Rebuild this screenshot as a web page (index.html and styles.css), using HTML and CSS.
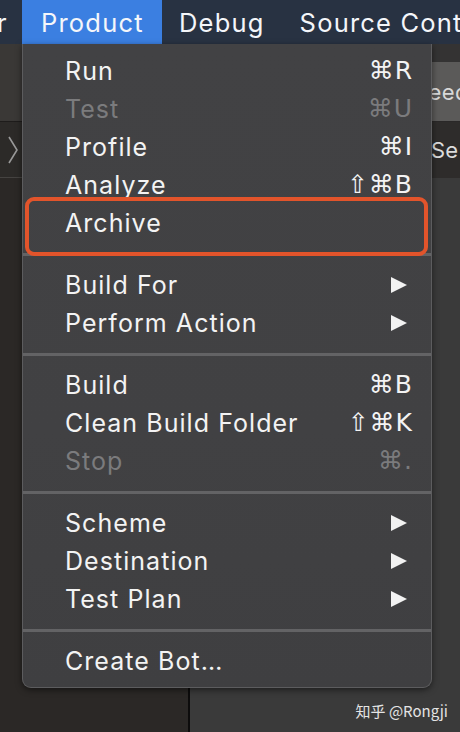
FILE: index.html
```html
<!DOCTYPE html>
<html>
<head>
<meta charset="utf-8">
<link rel="stylesheet" href="styles.css">
</head>
<body>
<div class="screen">
  <div class="menubar">
    <span class="mb-item mb-cut">r</span>
    <span class="mb-item mb-active">Product</span>
    <span class="mb-item">Debug</span>
    <span class="mb-item">Source Control</span>
  </div>
  <div class="window">
    <div class="pane-left">
      <div class="pl-top"></div>
      <div class="pl-row">
        <svg class="chev" width="12" height="30" viewBox="0 0 12 30"><polyline points="2,2 10,15 2,28" fill="none" stroke="#9a9a9a" stroke-width="1.6"/></svg>
      </div>
      <div class="pl-rest"></div>
    </div>
    <div class="pane-right">
      <div class="pr-strip"></div>
      <div class="pr-tool"><span class="pr-tool-text">eed</span></div>
      <div class="pr-row"><span class="pr-row-text">Se</span></div>
      <div class="pr-rest"></div>
    </div>
  </div>

  <div class="menu">
    <div class="row"><span>Run</span><span class="sc">⌘R</span></div>
    <div class="row dis"><span>Test</span><span class="sc">⌘U</span></div>
    <div class="row"><span>Profile</span><span class="sc">⌘I</span></div>
    <div class="row"><span>Analyze</span><span class="sc">⇧⌘B</span></div>
    <div class="row"><span>Archive</span></div>
    <div class="sep"></div>
    <div class="row"><span>Build For</span><svg class="tri" width="18" height="18" viewBox="0 0 18 18"><polygon points="1,1 17,9 1,17" fill="#f2f2f2"/></svg></div>
    <div class="row"><span>Perform Action</span><svg class="tri" width="18" height="18" viewBox="0 0 18 18"><polygon points="1,1 17,9 1,17" fill="#f2f2f2"/></svg></div>
    <div class="sep"></div>
    <div class="row"><span>Build</span><span class="sc">⌘B</span></div>
    <div class="row"><span>Clean Build Folder</span><span class="sc">⇧⌘K</span></div>
    <div class="row dis"><span>Stop</span><span class="sc">⌘.</span></div>
    <div class="sep"></div>
    <div class="row"><span>Scheme</span><svg class="tri" width="18" height="18" viewBox="0 0 18 18"><polygon points="1,1 17,9 1,17" fill="#f2f2f2"/></svg></div>
    <div class="row"><span>Destination</span><svg class="tri" width="18" height="18" viewBox="0 0 18 18"><polygon points="1,1 17,9 1,17" fill="#f2f2f2"/></svg></div>
    <div class="row"><span>Test Plan</span><svg class="tri" width="18" height="18" viewBox="0 0 18 18"><polygon points="1,1 17,9 1,17" fill="#f2f2f2"/></svg></div>
    <div class="sep"></div>
    <div class="row"><span>Create Bot…</span></div>
    <div class="highlight"></div>
  </div>

  <div class="watermark">知乎 @Rongji</div>
</div>
</body>
</html>
```

FILE: styles.css
```css
html, body {
  margin: 0;
  padding: 0;
  background: #2a2725;
}
.screen {
  position: relative;
  width: 460px;
  height: 732px;
  overflow: hidden;
  font-family: Inter, "Noto Sans", sans-serif;
  display: flex;
  flex-direction: column;
}
.menubar {
  height: 44px;
  flex: none;
  background: #283242;
  display: flex;
  align-items: stretch;
  white-space: nowrap;
  color: #f4f6fa;
  font-size: 25.5px;
  letter-spacing: 1.2px;
  overflow: hidden;
}
.mb-item {
  flex: none;
  display: flex;
  align-items: center;
  padding: 0 18px 0 17px;
}
.mb-cut {
  width: 25px;
  margin-left: -3px;
  box-sizing: border-box;
  padding: 0;
  justify-content: flex-start;
  overflow: hidden;
}
.mb-active {
  background: #3b7fe1;
  width: 140px;
  box-sizing: border-box;
  padding: 0 0 0 19px;
}
.window {
  flex: 1;
  display: flex;
}
.pane-left {
  width: 188px;
  border-right: 2px solid #0d0c0c;
  display: flex;
  flex-direction: column;
  background: #2b2826;
}
.pl-top {
  height: 77px;
  background: #3a3836;
  border-bottom: 1px solid #1e1c1b;
}
.pl-row {
  height: 55px;
  background: #2c2a28;
  border-bottom: 1px solid #454341;
  display: flex;
  align-items: center;
  padding-left: 7px;
}
.pl-rest { flex: 1; }
.pane-right {
  flex: 1;
  display: flex;
  flex-direction: column;
  background: #3a3a3a;
  overflow: hidden;
}
.pr-strip {
  height: 18px;
  background: #343333;
}
.pr-tool {
  height: 59px;
  background: #5b5a59;
  border-bottom: 1px solid #2a2828;
  display: flex;
  align-items: center;
  justify-content: flex-end;
}
.pr-tool-text {
  color: #d8d8d8;
  font-size: 22px;
  letter-spacing: 0.5px;
  margin-right: -9px;
}
.pr-row {
  height: 56px;
  background: #2e2c2b;
  display: flex;
  align-items: center;
  justify-content: flex-end;
}
.pr-row-text {
  color: #dcdcdc;
  font-size: 22px;
  margin-right: 2px;
}
.pr-rest { flex: 1; }

.menu {
  position: absolute;
  left: 22px;
  top: 44px;
  width: 410px;
  box-sizing: border-box;
  padding: 8px 0 7px;
  background: linear-gradient(180deg, #424244 0%, #414143 60%, #3f3f41 100%);
  border: 1px solid #5c5c5e;
  border-top: none;
  border-radius: 0 0 9px 9px;
  box-shadow: 0 2px 6px rgba(0,0,0,0.5);
  color: #f3f3f3;
  font-size: 25px;
  letter-spacing: 1.05px;
}
.row {
  height: 38px;
  display: flex;
  align-items: center;
  justify-content: space-between;
  padding: 0 19px 0 42px;
  line-height: 38px;
  white-space: nowrap;
}
.row.dis { color: #7b7b7d; }
.sc {
  font-family: "DejaVu Sans", sans-serif;
  font-size: 25px;
  letter-spacing: 1px;
  margin-right: -1px;
}
.tri { margin-right: 4px; }
.sep {
  height: 24px;
  display: flex;
  align-items: center;
}
.sep::before {
  content: "";
  display: block;
  width: 100%;
  height: 3px;
  background: #636365;
}
.highlight {
  position: absolute;
  left: 2px;
  top: 153px;
  width: 403px;
  height: 59px;
  box-sizing: border-box;
  border: 4px solid #e2542b;
  border-radius: 9px;
}
.watermark {
  position: absolute;
  right: 12px;
  top: 700px;
  font-family: "Noto Sans CJK SC", "Noto Sans", sans-serif;
  font-size: 15px;
  color: #e4e4e4;
}
```
